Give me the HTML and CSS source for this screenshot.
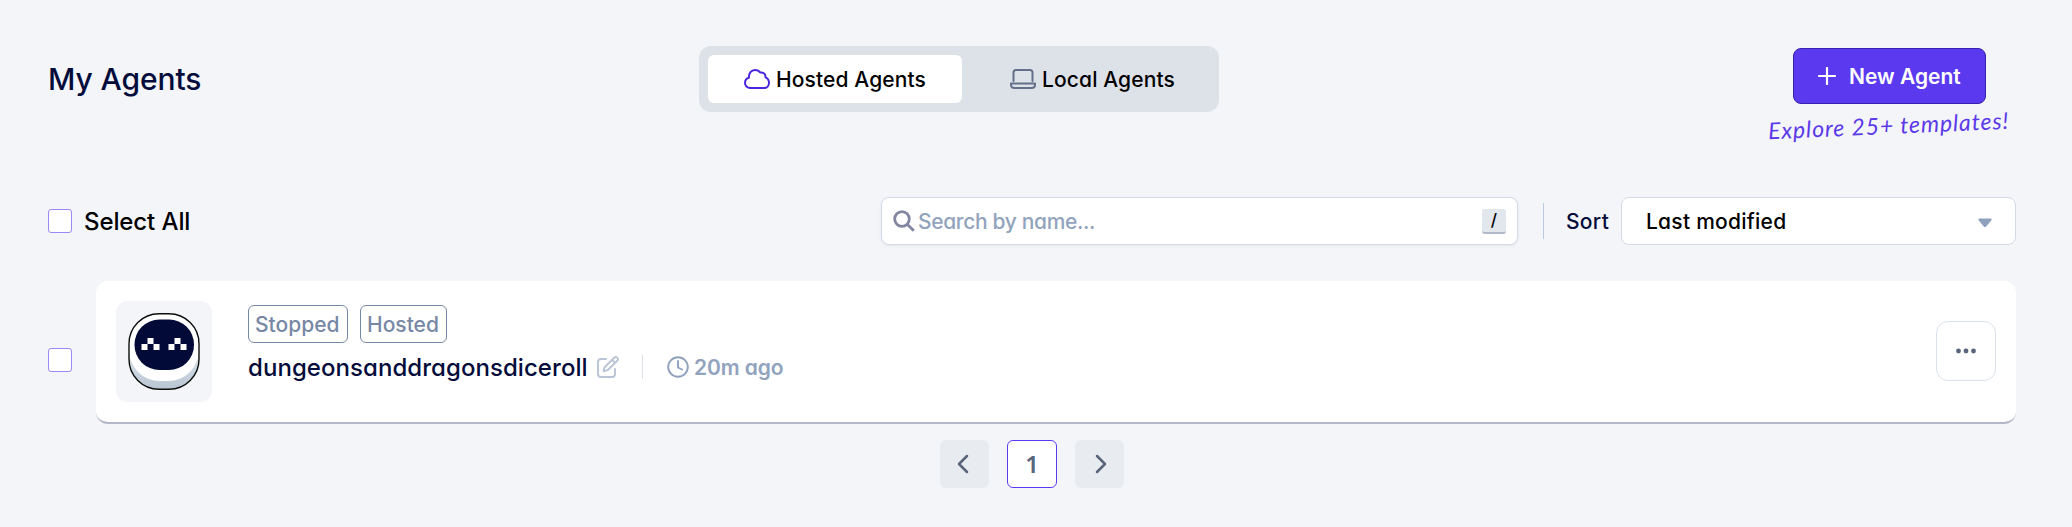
FILE: index.html
```html
<!DOCTYPE html>
<html lang="en">
<head>
<meta charset="utf-8">
<title>My Agents</title>
<link rel="stylesheet" href="styles.css">
</head>
<body>
<header class="header">
  <h1 class="title"><span>My Agents</span></h1>
  <nav class="tabs">
    <button class="tab tab-active">
      <svg class="tab-icon" viewBox="0 0 26 20" fill="none" stroke="#4a25e1" stroke-width="2" stroke-linejoin="round"><path d="M6.2 19C3.2 19 1 16.800 1 14C1 11.400 2.700 9.300 4.900 8.700C4.700 4.200 7.200 1 11 1C13.200 1 15.200 2 16.200 3.500C19.300 2.900 21.800 5.200 21.500 8.300C23.700 9.300 25 11.300 25 13.700C25 16.700 22.900 19 20 19Z"/></svg>
      <span class="t-hosted">Hosted Agents</span>
    </button>
    <button class="tab">
      <svg class="tab-icon" viewBox="0 0 26 20" fill="none" stroke="#647089" stroke-width="2" stroke-linejoin="round" stroke-linecap="round"><path d="M3.500 12V3.500Q3.500 1 6 1H20Q22.500 1 22.500 3.500V12M1 14.500H25V15.500Q25 19 21.500 19H4.500Q1 19 1 15.500Z"/></svg>
      <span class="t-local">Local Agents</span>
    </button>
  </nav>
  <div class="create">
    <button class="new-agent">
      <svg width="18" height="18" viewBox="0 0 18 18" stroke="#fff" stroke-width="2.200" stroke-linecap="round"><path d="M9 1V17M1 9H17"/></svg>
      <span class="t-new">New Agent</span>
    </button>
    <span class="hint">Explore 25+ templates!</span>
  </div>
</header>

<section class="toolbar">
  <span class="checkbox"></span>
  <span class="select-all">Select All</span>
  <div class="search">
    <svg width="22" height="22" viewBox="0 0 22 22" fill="none" stroke="#8286a0" stroke-width="2.800"><circle cx="9" cy="9" r="7.300"/><path d="M14.200 14.200L20.800 20.800"/></svg>
    <span class="placeholder">Search by name...</span>
    <kbd class="key">/</kbd>
  </div>
  <span class="divider"></span>
  <span class="sort-label">Sort</span>
  <div class="select">
    <span class="t-last">Last modified</span>
    <svg class="caret" width="14" height="10" viewBox="0 0 14 10" fill="#8fa1bd"><path d="M1.200 0.500H12.800Q14.200 1.300 13.200 2.600L8.200 8.600Q7 9.600 5.800 8.600L0.800 2.600Q-0.200 1.300 1.200 0.500Z"/></svg>
  </div>
</section>

<section class="row">
  <span class="checkbox row-check"></span>
  <article class="card">
    <div class="avatar">
      <svg width="72" height="77" viewBox="0 0 72 77">
        <defs><clipPath id="head"><rect x="1" y="1" width="70" height="75" rx="30"/></clipPath><linearGradient id="shade" x2="0" y2="1"><stop offset=".65" stop-color="#d3dce6"/><stop offset="1" stop-color="#b9c5d2"/></linearGradient></defs>
        <rect x="1" y="1" width="70" height="75" rx="30" fill="url(#shade)"/>
        <rect x="1" y="-9" width="70" height="77" rx="31" fill="#fff" clip-path="url(#head)"/>
        <rect x="1" y=".8" width="70" height="75.400" rx="30" fill="none" stroke="#0c100c" stroke-width="1.400"/>
        <rect x="6.500" y="6.500" width="59.500" height="50.500" rx="25" fill="#020b38"/>
        <path fill="#fff" d="M19.500 25h6v6h-6zM13.500 31h6v6h-6zM25.500 31h6v6h-6zM46.500 25h6v6h-6zM40.500 31h6v6h-6zM52.500 31h6v6h-6z"/>
      </svg>
    </div>
    <div class="info">
      <div class="badges"><span class="badge stopped">Stopped</span><span class="badge hosted">Hosted</span></div>
      <div class="meta">
        <span class="name">dungeonsanddragonsdiceroll</span>
        <svg class="edit" width="22" height="22" viewBox="0 0 22 22" fill="none" stroke="#b9c5d6" stroke-width="1.900" stroke-linejoin="round" stroke-linecap="round"><path d="M9 3H4Q1 3 1 6V18Q1 21 4 21H15Q18 21 18 18V13"/><path d="M17.200 1.800Q18.800.3 20.200 1.700Q21.700 3.200 20.200 4.800L10.500 14.200L6.500 15.300L7.600 11.300ZM15.200 3.800L18.200 6.800"/></svg>
        <span class="meta-divider"></span>
        <svg width="22" height="22" viewBox="0 0 22 22" fill="none" stroke="#8fa1bd" stroke-width="1.900" stroke-linecap="round" stroke-linejoin="round"><circle cx="11" cy="11" r="9.800"/><path d="M11 5V11.500L15 13.500"/></svg>
        <span class="time">20m ago</span>
      </div>
    </div>
    <button class="more"><svg width="22" height="6" viewBox="0 0 22 6" fill="#58657b"><circle cx="3.500" cy="3" r="2.400"/><circle cx="11" cy="3" r="2.400"/><circle cx="18.500" cy="3" r="2.400"/></svg></button>
  </article>
</section>

<nav class="pagination">
  <button class="page prev"><svg width="12" height="20" viewBox="0 0 12 20" fill="none" stroke="#58657b" stroke-width="2.500" stroke-linecap="round" stroke-linejoin="round"><path d="M10 2L2 10L10 18"/></svg></button>
  <button class="page current">1</button>
  <button class="page next"><svg width="12" height="20" viewBox="0 0 12 20" fill="none" stroke="#58657b" stroke-width="2.500" stroke-linecap="round" stroke-linejoin="round"><path d="M2 2L10 10L2 18"/></svg></button>
</nav>
</body>
</html>
```
FILE: styles.css
```css
* { box-sizing: border-box; }
body {
  margin: 0;
  height: 527px;
  overflow: hidden;
  padding: 46px 56px 0 48px;
  background: #f3f5f9;
  color: #000;
  font-family: Inter, "Open Sans", sans-serif;
  font-feature-settings: "cv11";
  font-weight: 500;
  font-size: 21px;
}
button { font: inherit; font-feature-settings: inherit; color: inherit; border: 0; padding: 0; margin: 0; background: none; letter-spacing: inherit; }
svg { display: block; flex: none; }
span { white-space: nowrap; }

.header { display: flex; align-items: flex-start; height: 151px; }
.title { flex: none; margin: 13px 0 0; width: 651px; font-size: 30px; line-height: 40px; font-weight: 500; letter-spacing: -0.1px; color: #030c3b; }
.tabs { display: flex; flex: none; width: 520px; height: 66px; padding: 9px; border-radius: 12px; background: #dde2e9; }
.tab { display: flex; align-items: center; gap: 6px; width: 254px; height: 48px; padding: 0 0 0 36px; border-radius: 6px; line-height: 28px; letter-spacing: 0.12px; }
.tab span { padding-top: 2px; }
.tab:last-child { width: 248px; padding-left: 48px; }
.tab-active { background: #fff; }
.tab-icon { width: 26px; height: 20px; }
.create { display: flex; flex: none; flex-direction: column; align-items: flex-start; margin: 2px 0 0 549px; width: 248px; }
.new-agent { display: flex; align-items: center; gap: 13px; width: 193px; height: 56px; margin-left: 25px; padding: 0 0 0 24px; border: 1px solid #3420ac; border-radius: 8px; background: #5b39ef; color: #fff; font-weight: 600; }
.hint { margin-top: 6px; font: italic 400 23px/30px Lato, sans-serif; letter-spacing: 0.9px; color: #5b39e8; transform: rotate(-2.500deg); }

.toolbar { display: flex; align-items: center; height: 48px; }
.checkbox { flex: none; width: 24px; height: 24px; border: 1px solid #9b87f5; border-radius: 3px; background: #fff; }
.select-all { width: 797px; margin-left: 12px; font-size: 24px; letter-spacing: -0.1px; }
.search { display: flex; align-items: center; width: 637px; height: 48px; padding: 0 11px; border: 1px solid #d3dae6; border-radius: 8px; background: #fff; box-shadow: 0 1px 3px #1c254012; }
.placeholder { margin-left: 3px; color: #91a3bd; font-weight: 550; letter-spacing: -0.35px; }
.key { width: 24px; height: 25px; margin-left: auto; border-bottom: 2px solid #b2b9ca; border-radius: 3px; background: #e2e7ee; font: 500 17px/23px Inter, sans-serif; text-align: center; }
.divider { width: 1px; height: 36px; margin-left: 25px; background: #bdcade; }
.sort-label { width: 55px; margin-left: 22px; color: #030c3b; letter-spacing: 0.3px; }
.select { display: flex; align-items: center; justify-content: space-between; width: 395px; height: 48px; padding: 0 23px 0 24px; border: 1px solid #d3dae6; border-radius: 8px; background: #fff; letter-spacing: 0.25px; }
.caret { margin-top: 3px; }

.row { display: flex; align-items: center; gap: 24px; margin-top: 36px; }
.row-check { margin-top: 15px; }
.card { display: flex; width: 1920px; height: 143px; padding: 20px 20px 0; border-bottom: 2px solid #b3b8c9; border-radius: 12px; background: #fff; }
.avatar { display: flex; align-items: center; justify-content: center; width: 96px; height: 101px; border-radius: 12px; background: #f3f5f9; }
.info { margin: 4px 0 0 36px; }
.badges { display: flex; gap: 12px; }
.badge { height: 38px; padding-left: 6px; border: 1px solid #7788a5; border-radius: 6px; line-height: 38px; font-weight: 550; color: #7788a5; }
.stopped { width: 100px; }
.hosted { width: 87px; }
.meta { display: flex; align-items: center; height: 36px; margin-top: 6px; }
.name { width: 349px; font-size: 24px; letter-spacing: 0.06px; color: #030c3b; }
.meta-divider { width: 1px; height: 24px; margin: 0 24px 0 23px; background: #dde2e9; }
.time { margin-left: 5px; color: #91a3bd; font-weight: 600; letter-spacing: -0.1px; }
.more { display: flex; align-items: center; justify-content: center; width: 60px; height: 60px; margin: 20px 0 0 auto; border: 1px solid #dce2eb; border-radius: 12px; }

.pagination { display: flex; gap: 18px; margin: 16px 0 0 892px; }
.page { display: flex; align-items: center; justify-content: center; width: 49px; height: 48px; border-radius: 6px; background: #e8ecf0; }
.prev { padding-right: 3px; }
.next { padding-left: 3px; }
.current { width: 50px; padding-bottom: 2px; border: 1px solid #5b39ef; background: #fff; color: #58657b; font: 600 24px "Noto Sans", sans-serif; }
```
